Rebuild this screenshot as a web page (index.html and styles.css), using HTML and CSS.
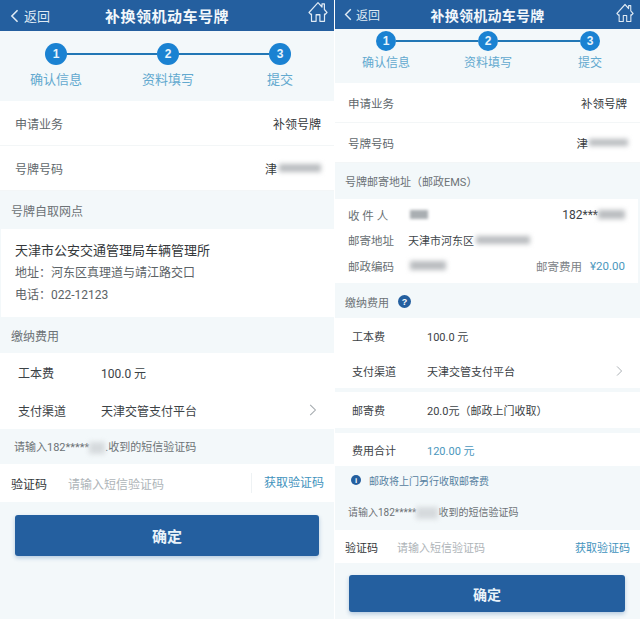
FILE: index.html
```html
<!DOCTYPE html>
<html lang="zh">
<head>
<meta charset="utf-8">
<title>补换领机动车号牌</title>
<link rel="stylesheet" href="styles.css">
</head>
<body>
<svg class="defs" width="0" height="0" aria-hidden="true">
  <symbol id="home" viewBox="0 0 20 20" preserveAspectRatio="none"><path d="M1 10.500 10 1.500l4 4V2.600h2.400v5.200L19 10.500l-2 1.800-.5-.4v6.600h-4.600v-6H8.100v6H3.500v-6.600l-.5.400z" fill="none" stroke="currentColor" stroke-width="1.200" stroke-linejoin="round"/></symbol>
</svg>
<div class="app">
  <section class="panel left">
    <header class="top">
      <span class="back"><svg class="chev" viewBox="0 0 10 16"><path d="M8.500 1.500 2 8l6.500 6.500" fill="none" stroke="currentColor" stroke-width="1.800"/></svg>返回</span>
      <h1>补换领机动车号牌</h1>
      <svg class="home"><use href="#home"/></svg>
    </header>
    <div class="steps">
      <div class="dots"><b>1</b><i></i><b>2</b><i></i><b>3</b></div>
      <div class="labels"><span>确认信息</span><span>资料填写</span><span>提交</span></div>
    </div>
    <div class="row info"><span class="k">申请业务</span><span class="v">补领号牌</span></div>
    <div class="row info"><span class="k">号牌号码</span><span class="v">津<em class="blur plate"></em></span></div>
    <div class="sec">号牌自取网点</div>
    <div class="site">
      <p class="name">天津市公安交通管理局车辆管理所</p>
      <p>地址：河东区真理道与靖江路交口</p>
      <p>电话：022-12123</p>
    </div>
    <div class="sec fee">缴纳费用</div>
    <div class="row pay"><span class="pk">工本费</span><span>100.0 元</span></div>
    <div class="row pay"><span class="pk">支付渠道</span><span>天津交管支付平台</span><svg class="go" viewBox="0 0 10 16"><path d="M1.500 1.500 8 8l-6.500 6.500" fill="none" stroke="currentColor" stroke-width="1.300"/></svg></div>
    <div class="hint">请输入182*****<em class="blur tail"></em>.收到的短信验证码</div>
    <div class="row code"><span class="ck">验证码</span><span class="ph">请输入短信验证码</span><span class="get">获取验证码</span></div>
    <div class="btn">确定</div>
  </section>

  <section class="panel right">
    <header class="top">
      <span class="back"><svg class="chev" viewBox="0 0 10 16"><path d="M8.500 1.500 2 8l6.500 6.500" fill="none" stroke="currentColor" stroke-width="1.800"/></svg>返回</span>
      <h1>补换领机动车号牌</h1>
      <svg class="home"><use href="#home"/></svg>
    </header>
    <div class="steps">
      <div class="dots"><b>1</b><i></i><b>2</b><i></i><b>3</b></div>
      <div class="labels"><span>确认信息</span><span>资料填写</span><span>提交</span></div>
    </div>
    <div class="row info"><span class="k">申请业务</span><span class="v">补领号牌</span></div>
    <div class="row info"><span class="k">号牌号码</span><span class="v">津<em class="blur plate"></em></span></div>
    <div class="sec">号牌邮寄地址（邮政EMS）</div>
    <div class="mail">
      <div class="line"><span class="mk">收 件 人</span><em class="blur who"></em><span class="end">182***<em class="blur phone"></em></span></div>
      <div class="line"><span class="mk">邮寄地址</span><span class="dark">天津市河东区<em class="blur addr"></em></span></div>
      <div class="line"><span class="mk">邮政编码</span><em class="blur zip"></em><span class="end">邮寄费用<span class="price">¥20.00</span></span></div>
    </div>
    <div class="sec fee">缴纳费用<span class="q">?</span></div>
    <div class="row pay"><span class="pk">工本费</span><span>100.0 元</span></div>
    <div class="row pay channel"><span class="pk">支付渠道</span><span>天津交管支付平台</span><svg class="go" viewBox="0 0 10 16"><path d="M1.500 1.500 8 8l-6.500 6.500" fill="none" stroke="currentColor" stroke-width="1.300"/></svg></div>
    <div class="row pay post"><span class="pk">邮寄费</span><span>20.0元（邮政上门收取）</span></div>
    <div class="row pay total"><span class="pk">费用合计</span><span class="sum">120.00 元</span></div>
    <div class="note"><span class="inf">i</span>邮政将上门另行收取邮寄费</div>
    <div class="hint">请输入182*****<em class="blur tail"></em>收到的短信验证码</div>
    <div class="row code"><span class="ck">验证码</span><span class="ph">请输入短信验证码</span><span class="get">获取验证码</span></div>
    <div class="btn">确定</div>
  </section>
</div>
</body>
</html>
```
FILE: styles.css
```css
* { box-sizing: border-box; }
html, body { margin: 0; height: 100%; }
body { width: 640px; height: 619px; overflow: hidden; background: #fff; font-family: Roboto, "Noto Sans CJK SC", sans-serif; color: #3c4246; }
p, h1 { margin: 0; }
em { font-style: normal; }
.defs { position: absolute; }
.app { display: flex; height: 619px; }
.panel { display: flex; flex-direction: column; background: #f3f8fa; }
.left { width: 334px; margin-right: 1px; }
.right { width: 305px; }

.top { position: relative; display: flex; align-items: center; justify-content: center; background: #245f9f; color: #fff; flex: none; }
.left .top { height: 31px; }
.right .top { height: 29px; }
.top h1 { font-weight: 700; color: #f2f7fb; }
.left .top h1 { font-size: 15px; letter-spacing: .5px; }
.right .top h1 { font-size: 14px; letter-spacing: .25px; }
.back { position: absolute; left: 10px; top: 0; bottom: 0; display: flex; align-items: center; gap: 5px; font-size: 13px; color: #dfeaf4; }
.right .back { left: 9px; gap: 4px; font-size: 12px; }
.chev { width: 9px; height: 14px; }
.right .chev { width: 8px; height: 13px; }
.home { position: absolute; right: 6px; top: 1px; width: 20px; height: 22px; color: #dfeaf4; }
.right .home { right: 6px; top: 3px; width: 18px; height: 20px; }

.steps { flex: none; display: flex; flex-direction: column; }
.left .steps { height: 70px; padding-top: 12px; }
.right .steps { height: 54px; padding-top: 2px; }
.dots { display: flex; align-items: center; }
.left .dots { margin: 0 43px 0 45px; }
.right .dots { margin: 0 40px 0 41px; }
.dots b { flex: none; display: flex; align-items: center; justify-content: center; width: 22px; height: 22px; border-radius: 50%; background: #1a82d2; color: #e8f4fc; font: 700 12px "Liberation Sans", sans-serif; }
.right .dots b { width: 20px; height: 20px; }
.dots i { flex: 1; height: 2px; background: #2277b5; }
.labels { display: grid; text-align: center; color: #62a9cf; line-height: 20px; }
.left .labels { grid-template-columns: repeat(3, 112px); margin-top: 5px; font-size: 13px; }
.right .labels { grid-template-columns: repeat(3, 102px); margin-top: 2px; font-size: 12px; }

.row { display: flex; align-items: center; background: #fff; flex: none; }
.info { justify-content: space-between; border-bottom: 1px solid #f3f6f7; }
.left .info { height: 45px; padding: 0 13px 0 15px; font-size: 12px; }
.right .info { height: 40px; padding: 0 13px; font-size: 11.500px; }
.k { color: #60676b; }
.v { display: flex; align-items: center; color: #35393c; }

.blur { display: inline-block; background: #b9bcbf; filter: blur(2.500px); }
.plate { width: 42px; height: 8px; margin-left: 2px; }
.right .plate { width: 39px; height: 7px; margin-left: 1px; margin-right: -1px; }
.tail { width: 16px; height: 12px; background: #d6dadd; vertical-align: middle; }
.right .tail { width: 22px; }
.who { width: 18px; height: 9px; margin-left: 2px; background: #a9aeb2; filter: blur(1.500px); }
.phone { width: 27px; height: 9px; }
.addr { width: 54px; height: 8px; margin-left: 2px; }
.zip { width: 36px; height: 9px; margin-left: 2px; }

.sec { flex: none; display: flex; align-items: center; color: #6c7276; }
.left .sec { height: 38px; padding-left: 11px; font-size: 12px; }
.left .fee { height: 36px; }
.right .sec { height: 36px; padding-left: 10px; font-size: 11px; }
.right .fee { height: 35px; padding-top: 2px; }

.site { flex: none; height: 88px; margin-left: 1px; padding: 10px 0 0 14px; background: #fff; color: #5c6367; font-size: 12px; line-height: 22px; }
.site .name { font-size: 13px; color: #33373a; line-height: 23px; }

.pay { color: #3c4246; }
.left .pay { height: 38px; padding-left: 18px; font-size: 12px; }
.right .pay { height: 35px; padding-left: 17px; font-size: 11px; }
.pk { flex: none; }
.left .pk { width: 83px; }
.right .pk { width: 75px; }
.go { width: 8px; height: 14px; margin-left: auto; color: #a3a9ad; }
.left .go { margin-right: 17px; }
.right .go { width: 7px; height: 12px; margin-right: 17px; }
.right .channel { margin-bottom: 4px; }
.right .post { height: 36px; margin-bottom: 5px; }
.right .total { height: 33px; }
.sum { color: #4b97bd; }

.mail { flex: none; height: 84px; margin-right: 2px; padding: 3px 13px 0; background: #fff; font-size: 11px; }
.line { display: flex; align-items: center; height: 25.500px; color: #686f73; }
.mk { flex: none; width: 60px; font-size: 11.500px; }
.dark { display: flex; align-items: center; color: #40464a; }
.end { display: flex; align-items: center; margin-left: auto; color: #7c8286; font-size: 11.500px; }
.line:first-child .end { color: #3c4246; font-size: 12px; }
.price { margin-left: 8px; color: #4b97bd; }
.q { display: flex; align-items: center; justify-content: center; width: 13px; height: 13px; margin-left: 9px; border-radius: 50%; background: #245f9f; color: #fff; font: 700 9px "Liberation Sans", sans-serif; }

.note { flex: none; height: 30px; display: flex; align-items: center; padding: 0 0 2px 16px; color: #55809f; font-size: 10px; }
.inf { display: flex; align-items: center; justify-content: center; width: 10px; height: 10px; margin-right: 8px; border-radius: 50%; background: #245f9f; color: #fff; font: 700 8px "Liberation Sans", sans-serif; }

.hint { flex: none; color: #6c7276; white-space: nowrap; }
.left .hint { height: 35px; line-height: 37px; padding-left: 14px; font-size: 11px; }
.right .hint { height: 34px; line-height: 34px; padding-left: 13px; font-size: 10px; }

.ck { flex: none; color: #33373a; }
.ph { color: #aeb4b8; }
.get { margin-left: auto; color: #3f93bd; white-space: nowrap; }
.left .code { height: 38px; padding: 0 10px 0 11px; font-size: 12px; }
.left .ck { width: 57px; }
.left .get { padding-left: 12px; border-left: 1px solid #eef2f4; line-height: 20px; }
.right .code { height: 33px; padding: 0 10px; font-size: 11px; }
.right .ck { width: 52px; }

.btn { flex: none; display: flex; align-items: center; justify-content: center; background: #245f9f; color: #e9f2f9; font-weight: 700; border-radius: 3px; box-shadow: 0 2px 4px rgba(36, 95, 159, .3); }
.left .btn { height: 41px; margin: 13px 15px 0; font-size: 15px; }
.right .btn { height: 37px; margin: 12px 15px 0 14px; font-size: 14px; }
```
